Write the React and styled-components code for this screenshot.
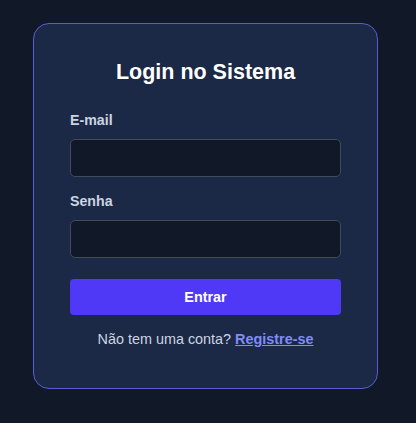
import styled, { createGlobalStyle } from "styled-components"

const GlobalStyle = createGlobalStyle`
    html, body {
        margin: 0;
        padding: 0;
        background: #111827;
        font-family: "Liberation Sans", Arial, sans-serif;
    }
    * {
        box-sizing: border-box;
    }
`

const Page = styled.div`
    min-height: 423px;
    padding: 23px 0 0 33px;
`
const Card = styled.form`
    width: 345px;
    padding: 36px 36px 41px;
    background: #1b2846;
    border: 1px solid #5b5bd6;
    border-radius: 16px;
    display: flex;
    flex-direction: column;
`
const Title = styled.h2`
    margin: 0 0 27px;
    font-size: 21.5px;
    font-weight: 700;
    color: #ffffff;
    text-align: center;
`
const Field = styled.div`
    display: flex;
    flex-direction: column;
    gap: 11px;
    margin-bottom: ${(p) => p.$last ? "21px" : "16px"};
`
const Label = styled.label`
    font-size: 14.2px;
    font-weight: 700;
    color: #cbd5e1;
`
const Input = styled.input`
    height: 38px;
    width: 100%;
    background: #111827;
    border: 1px solid #414b5c;
    border-radius: 5px;
    color: #e5e7eb;
    font-size: 14px;
    padding: 0 10px;
    outline: none;
`
const Button = styled.button`
    height: 36px;
    width: 100%;
    border: none;
    border-radius: 4px;
    background: #4f39f6;
    color: #ffffff;
    font-family: inherit;
    font-size: 14.4px;
    font-weight: 700;
    cursor: pointer;
`
const Footer = styled.p`
    margin: 16px 0 0;
    text-align: center;
    font-size: 14.4px;
    color: #cbd5e1;
`
const Link = styled.a`
    color: #818cf8;
    font-weight: 700;
    text-decoration: underline;
`

const App = () => {
  return (
    <Page>
      <GlobalStyle />
      <Card onSubmit={(e) => e.preventDefault()}>
        <Title>Login no Sistema</Title>
        <Field>
          <Label htmlFor="email">E-mail</Label>
          <Input id="email" type="email" />
        </Field>
        <Field $last>
          <Label htmlFor="senha">Senha</Label>
          <Input id="senha" type="password" />
        </Field>
        <Button type="submit">Entrar</Button>
        <Footer>
          Não tem uma conta? <Link href="#">Registre-se</Link>
        </Footer>
      </Card>
    </Page>
  )
}

export default App
